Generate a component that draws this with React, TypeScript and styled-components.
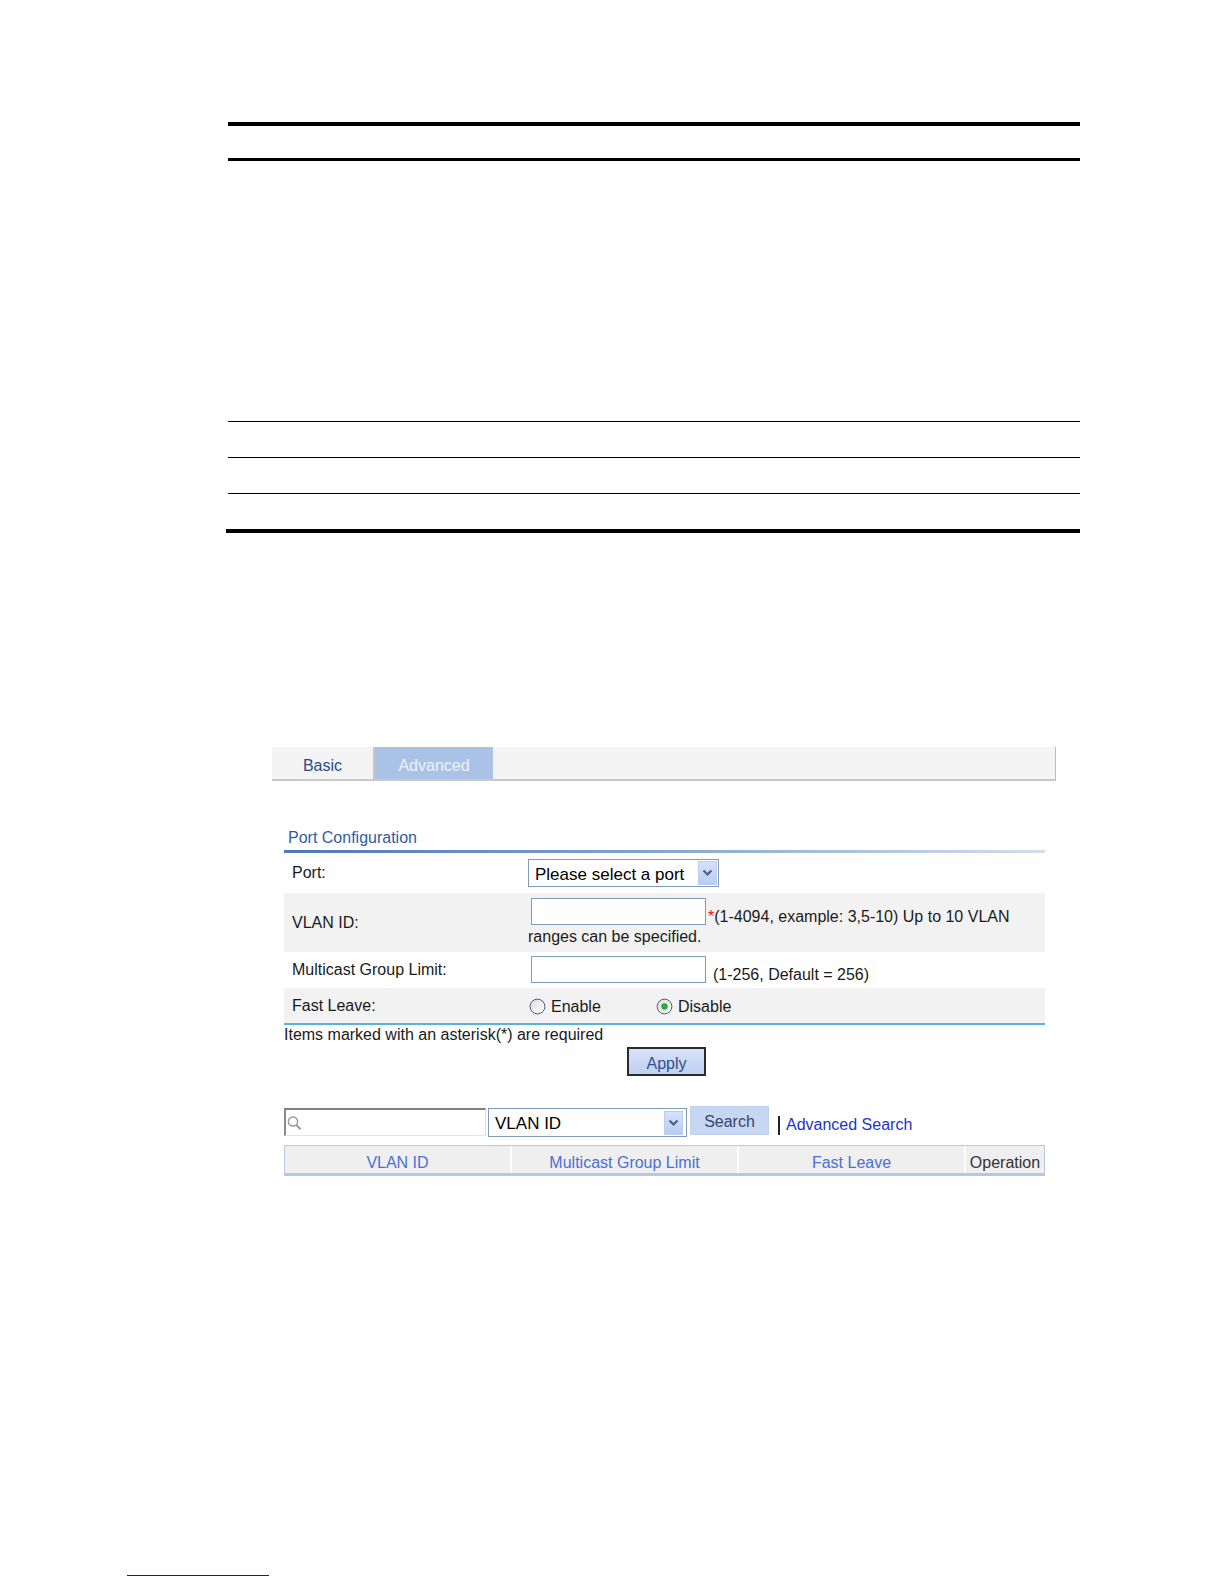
import React from 'react';
import styled, { createGlobalStyle } from 'styled-components';

const GlobalStyle = createGlobalStyle`
  body {
    margin: 0;
    background: #fff;
    font-family: 'Liberation Sans', Arial, sans-serif;
    font-size: 16px;
    color: #1a1a1a;
  }
`;

const Page = styled.div`
  width: 1224px;
  height: 1584px;
  padding-top: 122px;
  box-sizing: border-box;
  overflow: hidden;
`;

/* Document table (rules only, the cells are empty in the capture) */
const DocTable = styled.div`
  margin-left: 228px;
  width: 852px;
  border-top: 4px solid #000;
`;

const DocHeadRow = styled.div`
  height: 32px;
  border-bottom: 3px solid #000;
`;

const DocRow = styled.div<{ $height: number; $ruled?: boolean }>`
  height: ${({ $height }) => $height}px;
  border-top: ${({ $ruled }) => ($ruled ? '1px solid #000' : 'none')};
`;

const DocFoot = styled.div`
  margin-left: -2px;
  height: 4px;
  background: #000;
`;

/* Web UI capture */
const Screen = styled.div`
  margin: 214px 0 0 272px;
  width: 784px;
`;

const TabBar = styled.div`
  display: flex;
  height: 32px;
  background: #f4f4f4;
  border-bottom: 2px solid #c9c9c9;
  border-right: 1px solid #bdbdbd;
`;

const Tab = styled.div<{ $active?: boolean; $width: number }>`
  width: ${({ $width }) => $width}px;
  height: 32px;
  box-sizing: border-box;
  padding-top: 9px;
  line-height: 20px;
  text-align: center;
  font-size: 16px;
  color: ${({ $active }) => ($active ? '#eef3fb' : '#2a4a8a')};
  background: ${({ $active }) => ($active ? '#a9c2e6' : 'transparent')};
  border-left: ${({ $active }) => ($active ? '2px solid #c2c6ce' : 'none')};
`;

const Panel = styled.div`
  margin: 47px 11px 0 12px;
`;

const SectionTitle = styled.div`
  padding: 0 0 2px 4px;
  line-height: 20px;
  font-size: 16px;
  color: #2f5c9e;
`;

const TitleRule = styled.div`
  height: 3px;
  background: linear-gradient(to right, #4d79b8, #7fa0cf 45%, #d3deed);
`;

const Form = styled.div`
  border-bottom: 2px solid #5ab2dc;
`;

const FormRow = styled.div<{ $shaded?: boolean; $height: number }>`
  display: grid;
  grid-template-columns: 244px 1fr;
  align-items: center;
  min-height: ${({ $height }) => $height}px;
  background: ${({ $shaded }) => ($shaded ? '#f2f2f2' : '#fff')};
`;

const FieldLabel = styled.div`
  padding-left: 8px;
  line-height: 20px;
`;

const FieldValue = styled.div`
  line-height: 20px;
`;

const TextInput = styled.input`
  width: 175px;
  height: 27px;
  box-sizing: border-box;
  margin: 0 0 0 3px;
  padding: 0 3px;
  border: 1px solid #7f9db9;
  background: #fff;
  vertical-align: text-bottom;
  font: 16px 'Liberation Sans', Arial, sans-serif;
`;

const Required = styled.span`
  margin-left: 2px;
  color: #e02020;
`;

const Hint = styled.span`
  margin-left: 7px;
`;

const SelectBox = styled.div<{ $width: number; $height: number; $inset: number }>`
  display: flex;
  align-items: center;
  justify-content: space-between;
  width: ${({ $width }) => $width}px;
  height: ${({ $height }) => $height}px;
  box-sizing: border-box;
  padding: 0 ${({ $inset }) => $inset}px 0 6px;
  border: 1px solid #7f9db9;
  background: #fff;
  font-size: 17px;
  color: #000;
`;

const SelectText = styled.span`
  padding-top: 3px;
`;

const SelectArrow = styled.span`
  display: flex;
  align-items: center;
  justify-content: center;
  width: 19px;
  height: 24px;
  box-sizing: border-box;
  background: linear-gradient(#d6e2fc, #b7ccf6);
  border: 1px solid #bccdf0;
`;

const RadioGroup = styled.div`
  display: flex;
  margin-left: 1px;
  padding-top: 2px;
`;

const RadioOption = styled.label`
  display: flex;
  align-items: center;
  gap: 5px;
  width: 127px;
  line-height: 20px;
`;

const Note = styled.div`
  line-height: 20px;
`;

const ButtonRow = styled.div`
  display: flex;
  justify-content: center;
  margin-top: 2px;
  padding-left: 4px;
`;

const ApplyButton = styled.button`
  width: 79px;
  height: 29px;
  box-sizing: border-box;
  padding: 4px 0 0;
  border: 2px solid #2b2b2b;
  background: linear-gradient(#d8e3fa, #bfd0f3);
  color: #2f4f8f;
  font: 16px 'Liberation Sans', Arial, sans-serif;
`;

const Toolbar = styled.div`
  display: flex;
  align-items: flex-start;
  margin-top: 30px;
`;

const SearchField = styled.div`
  display: flex;
  align-items: center;
  width: 202px;
  height: 28px;
  box-sizing: border-box;
  margin-top: 2px;
  margin-right: 2px;
  border-top: 2px solid #808080;
  border-left: 2px solid #8a8a8a;
  border-right: 1px solid #dedede;
  border-bottom: 1px solid #e4e4e4;
  background: #fff;
`;

const SearchInput = styled.input`
  flex: 1;
  min-width: 0;
  height: 100%;
  border: none;
  outline: none;
  padding: 0 2px;
  background: transparent;
  font: 16px 'Liberation Sans', Arial, sans-serif;
`;

const SelectSlot = styled.div`
  margin-top: 2px;
`;

const SearchButton = styled.button`
  width: 79px;
  height: 29px;
  box-sizing: border-box;
  margin-left: 3px;
  padding: 3px 0 0;
  border: 1px solid #c0d1ee;
  background: #c8d7f1;
  color: #34466e;
  font: 16px 'Liberation Sans', Arial, sans-serif;
`;

const Divider = styled.span`
  width: 0;
  height: 19px;
  margin: 10px 0 0 9px;
  border-left: 2px solid #222;
`;

const LinkText = styled.a`
  margin: 9px 0 0 6px;
  line-height: 20px;
  color: #2233cc;
  text-decoration: none;
`;

const GridHeader = styled.div`
  display: grid;
  grid-template-columns: 225px 225px 225px 78px;
  column-gap: 2px;
  margin-top: 8px;
  background: #fff;
  border: 1px solid #b4c8e4;
  border-bottom-width: 3px;
`;

const HeaderCell = styled.div<{ $sortable?: boolean }>`
  height: 27px;
  box-sizing: border-box;
  padding-top: 7px;
  line-height: 20px;
  text-align: center;
  background: #efefef;
  color: ${({ $sortable }) => ($sortable ? '#4a6fd6' : '#333')};
  white-space: nowrap;
`;

const FootRule = styled.div`
  margin: 399px 0 0 127px;
  width: 142px;
  height: 1px;
  background: #1a1a8c;
`;

const Chevron = () => (
  <svg width="11" height="8" viewBox="0 0 11 8">
    <polyline
      points="1.5,1.5 5.5,5.5 9.5,1.5"
      fill="none"
      stroke="#4d6185"
      strokeWidth="2.2"
    />
  </svg>
);

const Magnifier = () => (
  <svg width="18" height="16" viewBox="0 0 18 16">
    <circle cx="7" cy="6.5" r="4.6" fill="none" stroke="#999" strokeWidth="1.5" />
    <line x1="10.4" y1="10" x2="14.5" y2="14.2" stroke="#999" strokeWidth="2" />
  </svg>
);

const RadioMark = ({ checked }: { checked?: boolean }) => (
  <svg width="17" height="17" viewBox="0 0 17 17">
    <defs>
      <linearGradient id={checked ? 'rg-on' : 'rg-off'} x1="0" y1="0" x2="1" y2="1">
        <stop offset="0" stopColor="#dcdcd6" />
        <stop offset="1" stopColor="#ffffff" />
      </linearGradient>
    </defs>
    <circle
      cx="8.5"
      cy="8.5"
      r="7.4"
      fill={`url(#${checked ? 'rg-on' : 'rg-off'})`}
      stroke="#3d6088"
      strokeWidth="1"
    />
    {checked && <circle cx="8.5" cy="8.5" r="3.2" fill="#2fa83a" />}
  </svg>
);

type SelectProps = { value: string; width: number; height: number; inset: number };

const Select = ({ value, width, height, inset }: SelectProps) => (
  <SelectBox $width={width} $height={height} $inset={inset}>
    <SelectText>{value}</SelectText>
    <SelectArrow>
      <Chevron />
    </SelectArrow>
  </SelectBox>
);

const columns = [
  { title: 'VLAN ID', sortable: true },
  { title: 'Multicast Group Limit', sortable: true },
  { title: 'Fast Leave', sortable: true },
  { title: 'Operation', sortable: false },
];

export default function App() {
  return (
    <Page>
      <GlobalStyle />

      <DocTable>
        <DocHeadRow />
        <DocRow $height={260} />
        <DocRow $height={35} $ruled />
        <DocRow $height={35} $ruled />
        <DocRow $height={35} $ruled />
        <DocFoot />
      </DocTable>

      <Screen>
        <TabBar>
          <Tab $width={101}>Basic</Tab>
          <Tab $width={120} $active>
            Advanced
          </Tab>
        </TabBar>

        <Panel>
          <SectionTitle>Port Configuration</SectionTitle>
          <TitleRule />

          <Form>
            <FormRow $height={40}>
              <FieldLabel>Port:</FieldLabel>
              <FieldValue>
                <Select value="Please select a port" width={191} height={28} inset={1} />
              </FieldValue>
            </FormRow>

            <FormRow $height={59} $shaded>
              <FieldLabel>VLAN ID:</FieldLabel>
              <FieldValue>
                <TextInput type="text" />
                <Required>*</Required>
                <span>(1-4094, example: 3,5-10) Up to 10 VLAN</span>{' '}
                <span>ranges can be specified.</span>
              </FieldValue>
            </FormRow>

            <FormRow $height={36}>
              <FieldLabel>Multicast Group Limit:</FieldLabel>
              <FieldValue>
                <TextInput type="text" />
                <Hint>(1-256, Default = 256)</Hint>
              </FieldValue>
            </FormRow>

            <FormRow $height={35} $shaded>
              <FieldLabel>Fast Leave:</FieldLabel>
              <RadioGroup>
                <RadioOption>
                  <RadioMark />
                  Enable
                </RadioOption>
                <RadioOption>
                  <RadioMark checked />
                  Disable
                </RadioOption>
              </RadioGroup>
            </FormRow>
          </Form>

          <Note>Items marked with an asterisk(*) are required</Note>
          <ButtonRow>
            <ApplyButton type="button">Apply</ApplyButton>
          </ButtonRow>

          <Toolbar>
            <SearchField>
              <Magnifier />
              <SearchInput type="text" />
            </SearchField>
            <SelectSlot>
              <Select value="VLAN ID" width={199} height={29} inset={3} />
            </SelectSlot>
            <SearchButton type="button">Search</SearchButton>
            <Divider />
            <LinkText href="#">Advanced Search</LinkText>
          </Toolbar>

          <GridHeader>
            {columns.map((col) => (
              <HeaderCell key={col.title} $sortable={col.sortable}>
                {col.title}
              </HeaderCell>
            ))}
          </GridHeader>
        </Panel>
      </Screen>

      <FootRule />
    </Page>
  );
}
